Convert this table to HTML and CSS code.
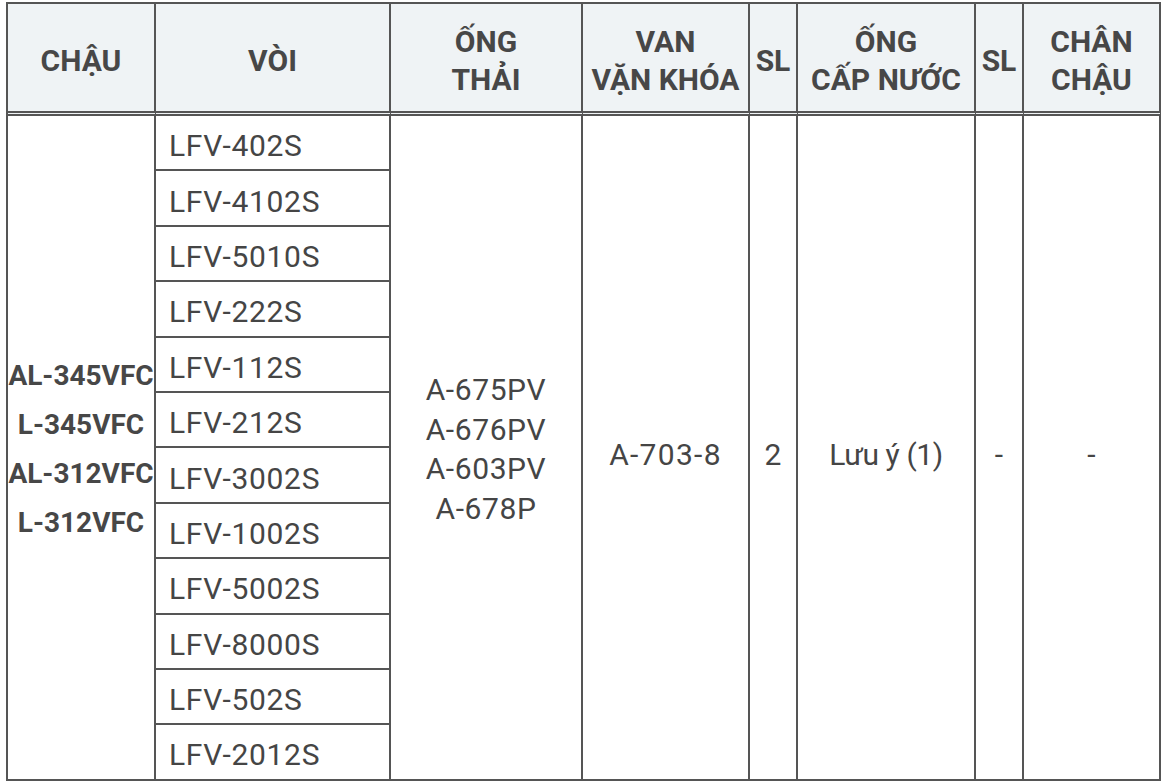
FILE: index.html
```html
<!DOCTYPE html>
<html lang="vi">
<head>
<meta charset="utf-8">
<title>Bảng phụ kiện chậu</title>
<link rel="stylesheet" href="styles.css">
</head>
<body>
<table class="spec">
  <colgroup>
    <col class="c-basin">
    <col class="c-faucet">
    <col class="c-drain">
    <col class="c-valve">
    <col class="c-qty">
    <col class="c-supply">
    <col class="c-qty">
    <col class="c-stand">
  </colgroup>
  <thead>
    <tr>
      <th>CHẬU</th>
      <th>VÒI</th>
      <th>ỐNG<br>THẢI</th>
      <th>VAN<br>VẶN KHÓA</th>
      <th class="narrow">SL</th>
      <th>ỐNG<br>CẤP NƯỚC</th>
      <th class="narrow">SL</th>
      <th>CHÂN<br>CHẬU</th>
    </tr>
  </thead>
  <tbody>
    <tr>
      <td rowspan="12" class="basin">AL-345VFC<br>L-345VFC<br>AL-312VFC<br>L-312VFC</td>
      <td class="faucet">LFV-402S</td>
      <td rowspan="12" class="drain">A-675PV<br>A-676PV<br>A-603PV<br>A-678P</td>
      <td rowspan="12" class="mid code">A-703-8</td>
      <td rowspan="12" class="mid">2</td>
      <td rowspan="12" class="mid note">Lưu ý (1)</td>
      <td rowspan="12" class="mid">-</td>
      <td rowspan="12" class="mid">-</td>
    </tr>
    <tr><td class="faucet">LFV-4102S</td></tr>
    <tr><td class="faucet">LFV-5010S</td></tr>
    <tr><td class="faucet">LFV-222S</td></tr>
    <tr><td class="faucet">LFV-112S</td></tr>
    <tr><td class="faucet">LFV-212S</td></tr>
    <tr><td class="faucet">LFV-3002S</td></tr>
    <tr><td class="faucet">LFV-1002S</td></tr>
    <tr><td class="faucet">LFV-5002S</td></tr>
    <tr><td class="faucet">LFV-8000S</td></tr>
    <tr><td class="faucet">LFV-502S</td></tr>
    <tr><td class="faucet">LFV-2012S</td></tr>
  </tbody>
</table>
</body>
</html>
```
FILE: styles.css
```css
html, body {
  margin: 0;
  padding: 0;
  background: #ffffff;
}

body {
  padding: 2px 0 0 6px;
  font-family: Roboto, "Liberation Sans", sans-serif;
  color: #454545;
}

.spec {
  table-layout: fixed;
  width: 1155px;
  border-collapse: separate;
  border-spacing: 0;
  border-left: 2px solid #555555;
  border-top: 2px solid #555555;
}

.c-basin { width: 148px; }
.c-faucet { width: 235px; }
.c-drain { width: 192px; }
.c-valve { width: 167px; }
.c-qty { width: 48px; }
.c-supply { width: 178px; }
.c-stand { width: 137px; }

.spec th,
.spec td {
  border-right: 2px solid #555555;
  border-bottom: 2px solid #555555;
  padding: 0;
  text-align: center;
  vertical-align: middle;
}

.spec th {
  height: 112px;
  box-sizing: border-box;
  padding-top: 6px;
  background: #eff3f5;
  border-bottom: 5px double #555555;
  font-weight: 700;
  font-size: 30px;
  line-height: 38px;
  color: #474747;
}

.spec td {
  font-size: 30px;
  font-weight: 400;
}

.spec tbody tr {
  height: 55.4px;
}

.spec td.faucet {
  text-align: left;
  padding: 7px 0 0 13px;
  line-height: 34px;
  letter-spacing: 0.7px;
}

.spec td.basin {
  font-weight: 700;
  font-size: 28px;
  line-height: 49px;
  padding-top: 4px;
  white-space: nowrap;
  color: #474747;
}

.spec td.drain {
  line-height: 39.5px;
  padding-top: 4px;
  letter-spacing: 0.6px;
}

.spec td.mid {
  padding-top: 14px;
}

.spec td.code {
  letter-spacing: 1.3px;
}

.spec td.note {
  letter-spacing: -0.4px;
}
```
